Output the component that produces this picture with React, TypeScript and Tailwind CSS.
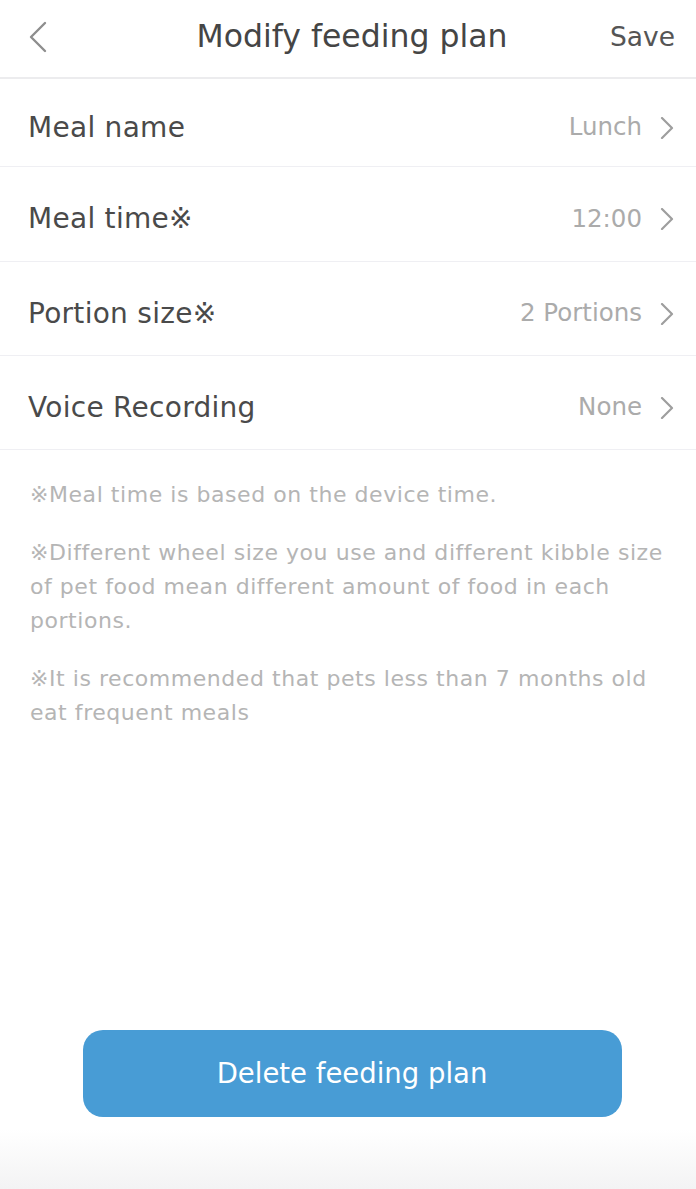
import React from 'react';

const rows = [
  { label: 'Meal name', value: 'Lunch', h: 'h-[88px]' },
  { label: 'Meal time※', value: '12:00', h: 'h-[95px]' },
  { label: 'Portion size※', value: '2 Portions', h: 'h-[94px]' },
  { label: 'Voice Recording', value: 'None', h: 'h-[94px]' },
];

function Chevron() {
  return (
    <svg width="16" height="22" viewBox="0 0 16 22" fill="none" className="shrink-0">
      <path d="M3 1 L13 11 L3 21" stroke="currentColor" strokeWidth={2.2} strokeLinecap="round" strokeLinejoin="round" />
    </svg>
  );
}

export default function App() {
  return (
    <div
      className="w-[696px] h-[1189px] flex flex-col bg-gradient-to-b from-white from-[95%] to-[#f3f3f4]"
      style={{ fontFamily: '"DejaVu Sans", "Liberation Sans", sans-serif' }}
    >
      {/* Header */}
      <div className="h-[79px] flex items-center pb-[4px] border-b-2 border-[#ececee]">
        <div className="w-[90px] pl-7 text-[#8e8e8e]">
          <svg width="20" height="32" viewBox="0 0 20 32" fill="none" className="block">
            <path d="M17 2 L3 16 L17 30" stroke="currentColor" strokeWidth={2.4} strokeLinecap="round" strokeLinejoin="round" />
          </svg>
        </div>
        <h1 className="flex-1 text-center text-[31.5px] text-[#454545] pl-[8px]">Modify feeding plan</h1>
        <div className="w-[90px] pr-[21px] text-right">
          <button className="text-[26.5px] text-[#555]">Save</button>
        </div>
      </div>

      {/* Rows */}
      <div>
        {rows.map((r) => (
          <div
            key={r.label}
            className={`${r.h} flex items-center justify-between pl-7 pr-[21px] pt-[10px] border-b border-[#efeff3]`}
          >
            <span className="text-[28px] tracking-[0.01em] text-[#4a4a4a]">{r.label}</span>
            <span className="flex items-center gap-[17px] text-[#9e9e9e]">
              <span className="text-[24.5px] text-[#ababab]">{r.value}</span>
              <Chevron />
            </span>
          </div>
        ))}
      </div>

      {/* Notes */}
      <div className="px-[30px] pt-[28px] text-[22px] tracking-[0.025em] leading-[34px] text-[#b5b5b5] flex flex-col gap-[24px]">
        <p>※Meal time is based on the device time.</p>
        <p>※Different wheel size you use and different kibble size of pet food mean different amount of food in each portions.</p>
        <p>※It is recommended that pets less than 7 months old eat frequent meals</p>
      </div>

      <div className="flex-1" />

      {/* Delete button */}
      <div className="flex justify-center pl-[8px] pb-[72px]">
        <button className="w-[539px] h-[87px] rounded-[20px] bg-[#489cd5] text-white text-[27.5px]">
          Delete feeding plan
        </button>
      </div>
    </div>
  );
}
